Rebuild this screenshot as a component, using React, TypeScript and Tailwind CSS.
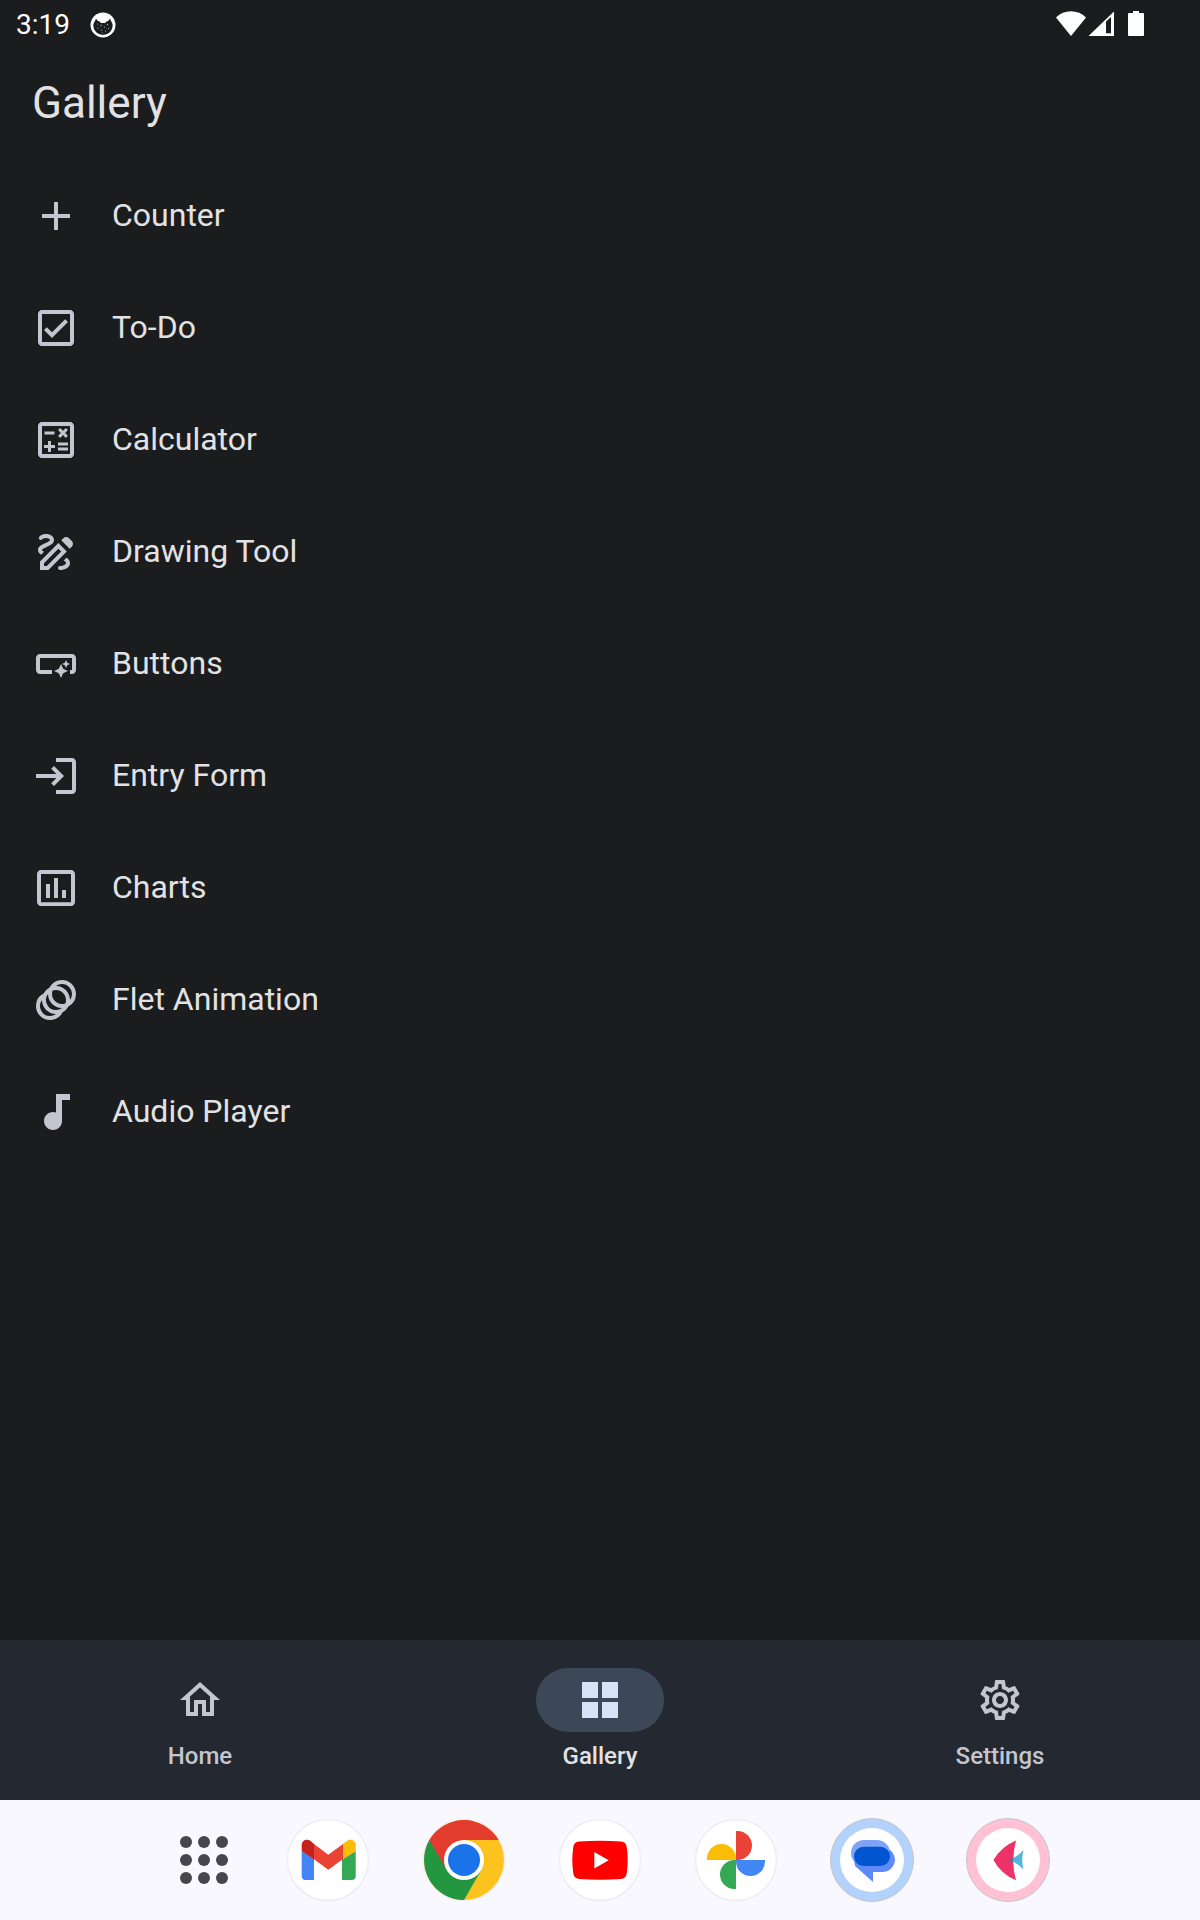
import type { ReactNode } from "react";
import {
  MdAdd,
  MdAnimation,
  MdAudiotrack,
  MdInsertChartOutlined,
  MdLogin,
  MdOutlineCalculate,
  MdOutlineCheckBox,
  MdOutlineDraw,
  MdOutlineHome,
  MdOutlineSettings,
  MdOutlineSmartButton,
} from "react-icons/md";

const galleryItems = [
  { label: "Counter", icon: MdAdd },
  { label: "To-Do", icon: MdOutlineCheckBox },
  { label: "Calculator", icon: MdOutlineCalculate },
  { label: "Drawing Tool", icon: MdOutlineDraw },
  { label: "Buttons", icon: MdOutlineSmartButton },
  { label: "Entry Form", icon: MdLogin },
  { label: "Charts", icon: MdInsertChartOutlined },
  { label: "Flet Animation", icon: MdAnimation },
  { label: "Audio Player", icon: MdAudiotrack },
];

const GridIcon = () => (
  <svg viewBox="0 0 24 24" fill="currentColor" className="size-12">
    <path d="M3 3h8v8H3zM13 3h8v8h-8zM3 13h8v8H3zM13 13h8v8h-8z" />
  </svg>
);

const CatIcon = () => (
  <svg viewBox="0 0 26 26" className="size-[26px]">
    <circle cx="13" cy="13" r="12.5" fill="#fff" />
    <path
      d="M6 6.500l1.500 2.300 2 .6 1.500 1.600h4l1.500-1.600 2-.6L20 6.500l1 2.500c.9 1.300 1.700 2.900 1.700 4.600A9.700 9.400 0 0 1 3.300 13.600C3.300 11.900 4.100 10.300 5 9z"
      fill="#1a1c1e"
    />
    <g fill="#b5b6b7">
      <circle cx="7.500" cy="12" r=".6" />
      <circle cx="11" cy="13.500" r=".7" />
      <circle cx="17.500" cy="12.500" r=".7" />
      <circle cx="14.500" cy="15" r=".6" />
      <circle cx="8" cy="16" r=".6" />
      <circle cx="18.500" cy="16.500" r=".6" />
      <circle cx="11.500" cy="18" r=".6" />
      <circle cx="15.500" cy="19" r=".6" />
      <circle cx="12.500" cy="21" r=".5" />
    </g>
  </svg>
);

const StatusBar = () => (
  <div className="flex h-12 items-center justify-between pl-4 pr-14 text-white">
    <div className="flex items-center gap-5 pt-0.5">
      <span className="text-[28px] leading-8">3:19</span>
      <CatIcon />
    </div>
    <svg viewBox="0 0 88 26" fill="#fff" className="h-[26px] w-[88px]">
      <path d="M0 6.500C8-1.800 22-1.800 30 6.500L15 25z" />
      <path d="M58 .5V25H32.500zM50 10.500v11.800h5V6z" fillRule="evenodd" />
      <path d="M77 0h6v2h4q1 0 1 1v21q0 1-1 1H73q-1 0-1-1V3q0-1 1-1h4z" />
    </svg>
  </div>
);

const NavButton = ({ label, active, children }: { label: string; active?: boolean; children: ReactNode }) => (
  <button
    type="button"
    aria-current={active ? "page" : undefined}
    className={`flex flex-1 flex-col items-center gap-2 pt-7 ${active ? "text-[#e2e2e5]" : "text-[#c3c6cf]"}`}
  >
    <span
      className={`flex h-16 w-32 items-center justify-center rounded-full ${
        active ? "bg-[#3c4858] text-[#d7e3f8]" : ""
      }`}
    >
      {children}
    </span>
    <span className="text-2xl leading-8 font-medium">{label}</span>
  </button>
);

/* White launcher disc, optionally with a coloured ring */
const AppIcon = ({ label, ring, children }: { label: string; ring?: string; children: ReactNode }) => (
  <button type="button" aria-label={label} className="shrink-0">
    <svg viewBox="0 0 84 84" className="size-[84px]">
      {ring ? (
        <>
          <circle cx="42" cy="42" r="41.5" fill={ring} stroke="#c5c4cc" strokeWidth="1" />
          <circle cx="42" cy="42" r="32" fill="#fff" />
        </>
      ) : (
        <circle cx="42" cy="42" r="40.5" fill="#fff" stroke="#efedf4" strokeWidth="1.5" />
      )}
      {children}
    </svg>
  </button>
);

const Taskbar = () => (
  <div className="flex h-[120px] items-center justify-center gap-[52px] bg-[#faf8ff] pl-6">
    <button type="button" aria-label="All apps" className="flex w-[60px] shrink-0 justify-center">
      <svg viewBox="0 0 48 48" fill="#46464b" className="size-12">
        {[6, 24, 42].map((y) => [6, 24, 42].map((x) => <circle key={`${x}-${y}`} cx={x} cy={y} r="6" />))}
      </svg>
    </button>

    <AppIcon label="Gmail">
      <path d="M15.700 33L28 41v21h-8.300q-4 0-4-4z" fill="#4285f4" />
      <path d="M69.700 33L56 41.500V62h9.700q4 0 4-4z" fill="#34a853" />
      <path d="M15.700 33v-6c0-5 5.300-6.800 9-4.100L28 26v15.500z" fill="#c5221f" />
      <path d="M69.700 33v-6c0-5-5.300-6.800-9-4.100L57 26v15z" fill="#fbbc04" />
      <path d="M28 26l14.300 10.700L57 26v15L42.300 51.700 28 41.300z" fill="#ea4335" />
    </AppIcon>

    <AppIcon label="Chrome">
      <circle cx="42" cy="42" r="40" fill="#fcc31e" />
      <path d="M7.400 22A40 40 0 0 0 42 82L59.300 52 42 42z" fill="#23963f" />
      <path d="M7.400 22A40 40 0 0 1 76.600 22H42v20L24.700 52z" fill="#e33b2e" />
      <circle cx="42" cy="42" r="20" fill="#fff" />
      <circle cx="42" cy="42" r="16" fill="#1a73e8" />
    </AppIcon>

    <AppIcon label="YouTube">
      <path
        d="M21 23.600q21-1.800 42 0 5 .5 5.700 5.400 2 13 0 26.500-.7 4.900-5.700 5.400-21 1.600-42 0-5-.5-5.700-5.400-2-13.500 0-26.500.7-4.900 5.700-5.400z"
        fill="#f00"
      />
      <path d="M36.300 34l14.400 8.200-14.400 8.200z" fill="#fff" />
    </AppIcon>

    <AppIcon label="Photos">
      <path d="M42 13h1.500a14.500 14.500 0 0 1 0 29H42z" fill="#ea4335" />
      <path d="M71 42v1.500a14.500 14.500 0 0 1-29 0V42z" fill="#4285f4" />
      <path d="M42 71h-1.500a14.500 14.500 0 0 1 0-29H42z" fill="#34a853" />
      <path d="M13 42v-1.500a14.500 14.500 0 0 1 29 0V42z" fill="#fbbc04" />
    </AppIcon>

    <AppIcon label="Messages" ring="#b3d2fc">
      <rect x="21" y="22" width="39" height="26" rx="13" fill="#7ea3f8" />
      <path d="M24 42l1 6 18 16V54h9a12.300 12.300 0 0 0 7.500-22.500L54 42z" fill="#5f8bfa" />
      <rect x="24" y="28.700" width="36" height="19.300" rx="9.700" fill="#0056d0" />
    </AppIcon>

    <AppIcon label="Flet" ring="#ffc1d3">
      <path d="M43 42q7-2 14.500-10-2.500 9.500 0 19.500-7.500-7.500-14.500-9.500z" fill="#52b5d9" />
      <path d="M50 22.600q-14.500 6-22.600 19.400Q35.500 56.500 50 62.300q-5.500-19 0-39.700z" fill="#ee3167" />
      <path d="M42 42q2.500-.8 5-2.500v5.500q-2.200-2-5-3z" fill="#5c7399" />
    </AppIcon>
  </div>
);

export default function App() {
  return (
    <div className="flex min-h-screen flex-col bg-[#1a1c1e] font-['Roboto',sans-serif]">
      <StatusBar />

      <header className="flex h-28 items-center px-8 pb-0.5">
        <h1 className="text-[44px] leading-[56px] text-[#e2e2e5]">Gallery</h1>
      </header>

      <main className="flex-1">
        <ul>
          {galleryItems.map(({ label, icon: Icon }) => (
            <li key={label}>
              <button type="button" className="flex h-28 w-full items-center gap-8 px-8 text-left">
                <Icon className="size-12 text-[#c3c6cf]" />
                <span className="pb-0.5 text-[32px] leading-12 text-[#e2e2e5]">{label}</span>
              </button>
            </li>
          ))}
        </ul>
      </main>

      <nav className="flex h-40 bg-[#242830]">
        <NavButton label="Home">
          <MdOutlineHome className="size-12" />
        </NavButton>
        <NavButton label="Gallery" active>
          <GridIcon />
        </NavButton>
        <NavButton label="Settings">
          <MdOutlineSettings className="size-12" />
        </NavButton>
      </nav>

      <Taskbar />
    </div>
  );
}
